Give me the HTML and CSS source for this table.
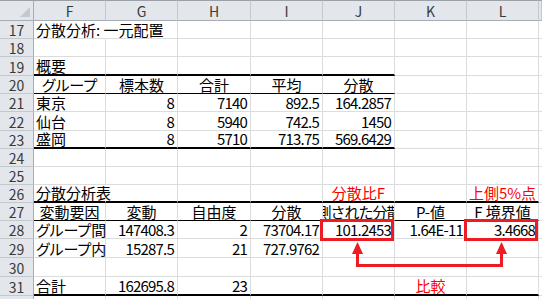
FILE: index.html
```html
<!DOCTYPE html>
<html lang="ja">
<head>
<meta charset="utf-8">
<link rel="stylesheet" href="styles.css">
</head>
<body>
<div class="sheet">
  <div class="row hdr">
    <div class="corner"><span class="tri"></span></div>
    <div class="ch">F</div><div class="ch">G</div><div class="ch">H</div><div class="ch">I</div><div class="ch">J</div><div class="ch">K</div><div class="ch">L</div><div class="ch"></div>
  </div>
  <div class="row r18">
    <div class="rh">17</div>
    <div class="c noright"><span class="ov">分散分析: 一元配置</span></div><div class="c"></div><div class="c"></div><div class="c"></div><div class="c"></div><div class="c"></div><div class="c"></div><div class="c"></div>
  </div>
  <div class="row r18">
    <div class="rh">18</div>
    <div class="c"></div><div class="c"></div><div class="c"></div><div class="c"></div><div class="c"></div><div class="c"></div><div class="c"></div><div class="c"></div>
  </div>
  <div class="row r19">
    <div class="rh">19</div>
    <div class="c thickb">概要</div><div class="c thickb"></div><div class="c thickb"></div><div class="c thickb"></div><div class="c thickb"></div><div class="c"></div><div class="c"></div><div class="c"></div>
  </div>
  <div class="row r18">
    <div class="rh">20</div>
    <div class="c ctr blackb">グループ</div><div class="c ctr blackb">標本数</div><div class="c ctr blackb">合計</div><div class="c ctr blackb">平均</div><div class="c ctr blackb">分散</div><div class="c"></div><div class="c"></div><div class="c"></div>
  </div>
  <div class="row r18">
    <div class="rh">21</div>
    <div class="c">東京</div><div class="c num">8</div><div class="c num">7140</div><div class="c num">892.5</div><div class="c num">164.2857</div><div class="c"></div><div class="c"></div><div class="c"></div>
  </div>
  <div class="row r19">
    <div class="rh">22</div>
    <div class="c">仙台</div><div class="c num">8</div><div class="c num">5940</div><div class="c num">742.5</div><div class="c num">1450</div><div class="c"></div><div class="c"></div><div class="c"></div>
  </div>
  <div class="row r18">
    <div class="rh">23</div>
    <div class="c thickb">盛岡</div><div class="c num thickb">8</div><div class="c num thickb">5710</div><div class="c num thickb">713.75</div><div class="c num thickb">569.6429</div><div class="c"></div><div class="c"></div><div class="c"></div>
  </div>
  <div class="row r18">
    <div class="rh">24</div>
    <div class="c"></div><div class="c"></div><div class="c"></div><div class="c"></div><div class="c"></div><div class="c"></div><div class="c"></div><div class="c"></div>
  </div>
  <div class="row r18">
    <div class="rh">25</div>
    <div class="c"></div><div class="c"></div><div class="c"></div><div class="c"></div><div class="c"></div><div class="c"></div><div class="c"></div><div class="c"></div>
  </div>
  <div class="row r18">
    <div class="rh">26</div>
    <div class="c thickb noright"><span class="ov">分散分析表</span></div><div class="c thickb"></div><div class="c thickb"></div><div class="c thickb"></div><div class="c thickb ctr red">分散比F</div><div class="c thickb"></div><div class="c thickb ctr red">上側5%点</div><div class="c"></div>
  </div>
  <div class="row r18">
    <div class="rh">27</div>
    <div class="c ctr blackb">変動要因</div><div class="c ctr blackb">変動</div><div class="c ctr blackb">自由度</div><div class="c ctr blackb">分散</div><div class="c ctr blackb clip"><span class="clipin">観測された分散比</span></div><div class="c ctr blackb">P-値</div><div class="c ctr blackb">F 境界値</div><div class="c"></div>
  </div>
  <div class="row r18">
    <div class="rh">28</div>
    <div class="c">グループ間</div><div class="c num">147408.3</div><div class="c num">2</div><div class="c num">73704.17</div><div class="c num">101.2453</div><div class="c num">1.64E-11</div><div class="c num">3.4668</div><div class="c"></div>
  </div>
  <div class="row r19">
    <div class="rh">29</div>
    <div class="c">グループ内</div><div class="c num">15287.5</div><div class="c num">21</div><div class="c num">727.9762</div><div class="c"></div><div class="c"></div><div class="c"></div><div class="c"></div>
  </div>
  <div class="row r19">
    <div class="rh">30</div>
    <div class="c"></div><div class="c"></div><div class="c"></div><div class="c"></div><div class="c"></div><div class="c"></div><div class="c"></div><div class="c"></div>
  </div>
  <div class="row r19">
    <div class="rh">31</div>
    <div class="c thickb">合計</div><div class="c num thickb">162695.8</div><div class="c num thickb">23</div><div class="c thickb"></div><div class="c thickb"></div><div class="c thickb ctr red">比較</div><div class="c thickb"></div><div class="c"></div>
  </div>
  <div class="row r19">
    <div class="rh"></div>
    <div class="c"></div><div class="c"></div><div class="c"></div><div class="c"></div><div class="c"></div><div class="c"></div><div class="c"></div><div class="c"></div>
  </div>

  <svg class="marks" width="542" height="299" viewBox="0 0 542 299" xmlns="http://www.w3.org/2000/svg">
    <rect x="321.5" y="220.5" width="71" height="19" fill="none" stroke="#ed1c24" stroke-width="3"/>
    <rect x="465.5" y="220.5" width="71" height="19" fill="none" stroke="#ed1c24" stroke-width="3"/>
    <polyline points="357.5,250 357.5,265.5 501.5,265.5 501.5,250" fill="none" stroke="#ed1c24" stroke-width="3"/>
    <polygon points="357.5,242 352,254 363,254" fill="#ed1c24"/>
    <polygon points="501.5,242 496,254 507,254" fill="#ed1c24"/>
  </svg>
</div>
</body>
</html>
```
FILE: styles.css
```css
html, body {
  margin: 0;
  padding: 0;
  background: #fff;
}
body {
  width: 542px;
  height: 299px;
  overflow: hidden;
  font-family: "Noto Sans CJK JP", sans-serif;
  font-feature-settings: "palt";
  color: #000;
}
.sheet {
  position: relative;
  width: 542px;
  height: 299px;
  overflow: hidden;
}
.row {
  display: grid;
  grid-template-columns: 34px 72px 72px 73px 72px 72px 72px 72px 1fr;
}
.hdr { height: 21px; }
.r18 { height: 18px; }
.r19 { height: 19px; }

.corner, .ch, .rh {
  box-sizing: border-box;
  background: #e3e6eb;
  color: #3a3a3a;
  font-size: 14px;
  line-height: 1;
  display: flex;
  align-items: center;
  justify-content: center;
}
.corner {
  position: relative;
  border-right: 1px solid #a7adb5;
  border-bottom: 1px solid #a7adb5;
  border-top: 1px solid #9aa0a8;
}
.tri {
  position: absolute;
  right: 3px;
  bottom: 3px;
  width: 0;
  height: 0;
  border-left: 10px solid transparent;
  border-bottom: 10px solid #c4c9d0;
}
.ch {
  border-right: 1px solid #c3c8cf;
  border-bottom: 1px solid #a7adb5;
  border-top: 1px solid #9aa0a8;
  padding-top: 1px;
}
.rh {
  border-right: 1px solid #a7adb5;
  border-bottom: 1px solid #c3c8cf;
  padding-top: 1px;
}

.c {
  box-sizing: border-box;
  border-right: 1px solid #dadcdd;
  border-bottom: 1px solid #dadcdd;
  font-size: 15px;
  line-height: 15px;
  white-space: nowrap;
  display: flex;
  align-items: flex-end;
  padding: 0 2px 1px 2px;
  min-width: 0;
}
.noright { border-right-color: transparent; }
.ov { position: relative; z-index: 1; }
.ctr { justify-content: center; }
.num {
  justify-content: flex-end;
  letter-spacing: -0.8px;
  padding-right: 3px;
}
.thickb { border-bottom: 2px solid #000; }
.blackb { border-bottom: 1px solid #000; }
.red { color: #ff0000; }
.clip { overflow: hidden; }
.clipin {
  flex: none;
  font-feature-settings: normal;
  letter-spacing: -1px;
}

.marks {
  position: absolute;
  left: 0;
  top: 0;
  pointer-events: none;
}
```
